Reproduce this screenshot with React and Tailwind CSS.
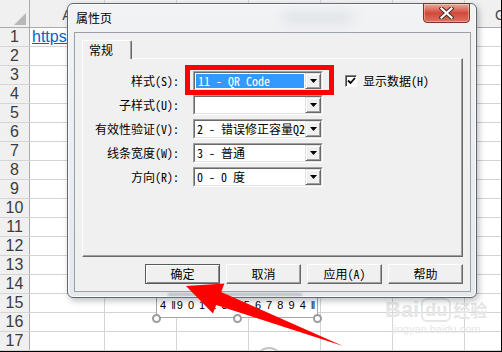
import React from 'react';

const cjk = "font-['Noto_Sans_Mono_CJK_SC','Noto_Sans_CJK_SC',sans-serif]";

const colLetters = ['A', 'B', 'C', 'D', 'E', 'F', 'G'];
const colWidths = ['w-[75px]', 'w-[72px]', 'w-[72px]', 'w-[72px]', 'w-[72px]', 'w-[72px]', 'w-[72px]'];
const rows = Array.from({ length: 17 }, (_, i) => i + 1);

const fields = [
    { label: '样式(S):', value: '11 - QR Code', selected: true },
    { label: '子样式(U):', value: '' },
    { label: '有效性验证(V):', value: '2 - 错误修正容量Q25%' },
    { label: '线条宽度(W):', value: '3 - 普通' },
    { label: '方向(R):', value: '0 - 0 度' },
];

const DropButton = () => (
    <div className="flex h-full w-[16px] shrink-0 items-center justify-center border border-t-[#e3e3e3] border-l-[#e3e3e3] border-r-[#696969] border-b-[#696969] bg-[#f0f0f0] shadow-[inset_1px_1px_0_#fff,inset_-1px_-1px_0_#a0a0a0]">
        <svg width="7" height="4" viewBox="0 0 7 4">
            <polygon points="0,0 7,0 3.5,4" fill="#000" />
        </svg>
    </div>
);

const Combo = ({ value, selected }) => (
    <div className="flex h-[20px] w-[130px] border border-t-[#a0a0a0] border-l-[#a0a0a0] border-r-white border-b-white">
        <div className="flex min-w-0 flex-1 border border-t-[#696969] border-l-[#696969] border-r-[#e3e3e3] border-b-[#e3e3e3] bg-white">
            <div className="min-w-0 flex-1 overflow-hidden p-px">
                <div
                    className={
                        selected
                            ? 'h-full whitespace-nowrap bg-[#3399ff] pl-[2px] text-[12px] leading-[14px] text-white'
                            : 'h-full whitespace-nowrap pl-[1px] text-[12px] leading-[14px] text-black'
                    }
                >
                    {value}
                </div>
            </div>
            <DropButton />
        </div>
    </div>
);

const DlgButton = ({ children, isDefault }) => (
    <button
        className={
            isDefault
                ? 'h-[20px] w-[75px] border border-[#5a5a5a] bg-[#f0f0f0] text-[12px] leading-[18px] text-black shadow-[inset_1px_1px_0_#fff,inset_-1px_-1px_0_#8a8a8a]'
                : 'h-[20px] w-[75px] border border-t-white border-l-white border-r-[#696969] border-b-[#696969] bg-[#f0f0f0] text-[12px] leading-[18px] text-black shadow-[inset_-1px_-1px_0_#a0a0a0]'
        }
    >
        {children}
    </button>
);

const Sheet = () => (
    <div className="flex flex-col font-['Liberation_Sans',sans-serif]">
        {/* column headers */}
        <div className="flex h-[28px] border-b border-[#ababab] bg-[#f0f0f0]">
            <div className="relative w-[30px] shrink-0 border-r border-[#ababab]">
                <svg className="absolute right-[3px] bottom-[2px]" width="12" height="12" viewBox="0 0 12 12">
                    <polygon points="12,0 12,12 0,12" fill="#b8b8b8" />
                </svg>
            </div>
            {colLetters.map((c, i) => (
                <div
                    key={c}
                    className={`${colWidths[i]} flex shrink-0 items-end justify-center border-r border-[#d4d4d4] pb-[1px] text-[14px] text-[#444]`}
                >
                    {c}
                </div>
            ))}
        </div>
        {rows.map((r) => (
            <div key={r} className="flex h-[19px] border-b border-[#d4d4d4] bg-white">
                <div className="flex w-[30px] shrink-0 items-center justify-center border-r border-[#ababab] bg-[#f0f0f0] text-[16px] leading-none text-[#3c3c3c]">
                    {r}
                </div>
                {colWidths.map((w, i) => (
                    <div key={i} className={`${w} shrink-0 border-r border-[#d4d4d4]`}>
                        {r === 1 && i === 0 && (
                            <span className="block pl-[2px] text-[16px] leading-[18px] text-[#0563c1] underline">
                                https://
                            </span>
                        )}
                    </div>
                ))}
            </div>
        ))}
    </div>
);

const App = () => {
    return (
        <div className="relative h-[352px] w-[502px] overflow-hidden border-r border-b border-black bg-white">
            <Sheet />

            {/* barcode object on the sheet */}
            <div className="absolute left-[156px] top-[290px] h-[28px] w-[162px] border-x border-b border-[#a6a6a6] bg-white">
                <div className="absolute left-[3px] top-[9px] whitespace-nowrap font-['Liberation_Sans',sans-serif] text-[11px] leading-[12px] tracking-[1px] text-black">
                    4 ‖9 0 1 2 3 4 5 6 7 8 9 4 ‖
                </div>
            </div>
            {[152, 233, 313].map((x) => (
                <div
                    key={x}
                    className={
                        x === 152
                            ? 'absolute left-[152px] top-[314px] h-[9px] w-[9px] rounded-full border-2 border-[#9c9c9c] bg-white'
                            : x === 233
                            ? 'absolute left-[233px] top-[314px] h-[9px] w-[9px] rounded-full border-2 border-[#9c9c9c] bg-white'
                            : 'absolute left-[313px] top-[314px] h-[9px] w-[9px] rounded-full border-2 border-[#9c9c9c] bg-white'
                    }
                />
            ))}
            <div className="absolute left-[255px] top-[347px] h-[28px] w-[28px] rounded-full border-2 border-[#c4c4c4] bg-[#f4f4f4]" />

            {/* baidu watermark */}
            <div className="absolute left-[385px] top-[298px] flex flex-col items-center font-['Liberation_Sans',sans-serif] text-[#e6e6e6]">
                <div className="flex items-end gap-[2px] text-[22px] font-bold leading-[24px]">
                    <span>Bai</span>
                    <span className="rounded-[6px] border-2 border-[#e6e6e6] px-[2px] text-[18px] leading-[20px]">du</span>
                    <span className={`${cjk} text-[17px]`}>经验</span>
                </div>
                <div className="text-[11px] leading-[14px]">jingyan.baidu.com</div>
            </div>

            {/* property page dialog */}
            <div
                className={`${cjk} absolute left-[67px] top-[3px] flex h-[295px] w-[410px] flex-col rounded-[6px] border border-[#5e6670] bg-gradient-to-b from-[#f1f3f5] to-[#e6e9ec] shadow-[inset_0_0_0_1px_#fbfcfd,2px_3px_6px_rgba(0,0,0,0.25)]`}
            >
                <div className="relative flex h-[28px] shrink-0 items-center pl-[8px]">
                    <span className="text-[12px] leading-none text-black">属性页</span>
                    <div className="absolute left-[215px] top-[8px] h-[12px] w-[70px] rounded-full bg-[#e0e3e7] blur-[6px]" />
                    {/* close button */}
                    <div className="absolute left-[355px] top-[-1px] flex h-[20px] w-[47px] items-center justify-center rounded-b-[4px] border border-[#7b3326] bg-gradient-to-b from-[#e9a99c] via-[#d2473a] to-[#d97362] shadow-[inset_0_0_0_1px_rgba(255,255,255,0.35)]">
                        <svg width="15" height="12" viewBox="0 0 15 12">
                            <path d="M2.5 1.5 L12.5 10.5 M12.5 1.5 L2.5 10.5" stroke="#4a2a24" strokeWidth="4.2" strokeLinecap="square" />
                            <path d="M2.5 1.5 L12.5 10.5 M12.5 1.5 L2.5 10.5" stroke="#fff" strokeWidth="2.2" strokeLinecap="square" />
                        </svg>
                    </div>
                </div>

                {/* client area */}
                <div className="ml-[6px] mr-[5px] flex h-[260px] flex-col border border-[#9aa0a6] bg-[#f0f0f0] px-[7px] pt-[7px]">
                    {/* tab */}
                    <div className="relative z-10 -mb-px flex h-[19px] w-[50px] items-center rounded-t-[2px] border border-b-0 border-t-white border-l-white border-r-[#696969] bg-[#f0f0f0] pl-[6px] shadow-[inset_-1px_0_0_#a0a0a0] text-[12px] leading-none text-black">
                        常规
                    </div>
                    {/* tab panel */}
                    <div className="h-[199px] border border-t-white border-l-white border-r-[#696969] border-b-[#696969] pt-[12px] shadow-[inset_-1px_-1px_0_#a0a0a0]">
                        <div className="flex flex-col gap-[4px]">
                            {fields.map((f) => (
                                <div key={f.label} className="flex h-[20px] items-center">
                                    <div className="w-[96px] shrink-0 whitespace-nowrap text-right text-[12px] leading-none text-black">
                                        {f.label}
                                    </div>
                                    <div className="relative ml-[14px]">
                                        <Combo value={f.value} selected={f.selected} />
                                        {f.selected && (
                                            <div className="pointer-events-none absolute left-[-8px] right-[-11px] top-[-6px] bottom-[-4px] border-[5px] border-[#ff0000]" />
                                        )}
                                    </div>
                                    {f.selected && (
                                        <div className="ml-[22px] flex items-center gap-[6px]">
                                            <div className="flex h-[12px] w-[12px] items-center justify-center border border-t-[#808080] border-l-[#808080] border-r-white border-b-white bg-white shadow-[inset_1px_1px_0_#404040]">
                                                <svg width="9" height="8" viewBox="0 0 9 8">
                                                    <path d="M1 3.5 L3.5 6 L8 1" stroke="#000" strokeWidth="1.8" fill="none" />
                                                </svg>
                                            </div>
                                            <span className="whitespace-nowrap text-[12px] leading-none text-black">显示数据(H)</span>
                                        </div>
                                    )}
                                </div>
                            ))}
                        </div>
                    </div>
                    {/* buttons */}
                    <div className="mt-[7px] flex justify-end gap-[6px]">
                        <DlgButton isDefault>确定</DlgButton>
                        <DlgButton>取消</DlgButton>
                        <DlgButton>应用(A)</DlgButton>
                        <DlgButton>帮助</DlgButton>
                    </div>
                </div>
                <div className="absolute left-[100px] top-[289px] h-[3px] w-[134px] bg-[#b8bcc0] blur-[1px]" />
            </div>

            {/* red arrow */}
            <svg className="pointer-events-none absolute left-0 top-0" width="502" height="352" viewBox="0 0 502 352">
                <polygon
                    points="186,286 224.4,283.6 221.2,292 343,346 216.2,305 213,313.4"
                    fill="#ff0000"
                />
            </svg>
        </div>
    );
};

export default App;
